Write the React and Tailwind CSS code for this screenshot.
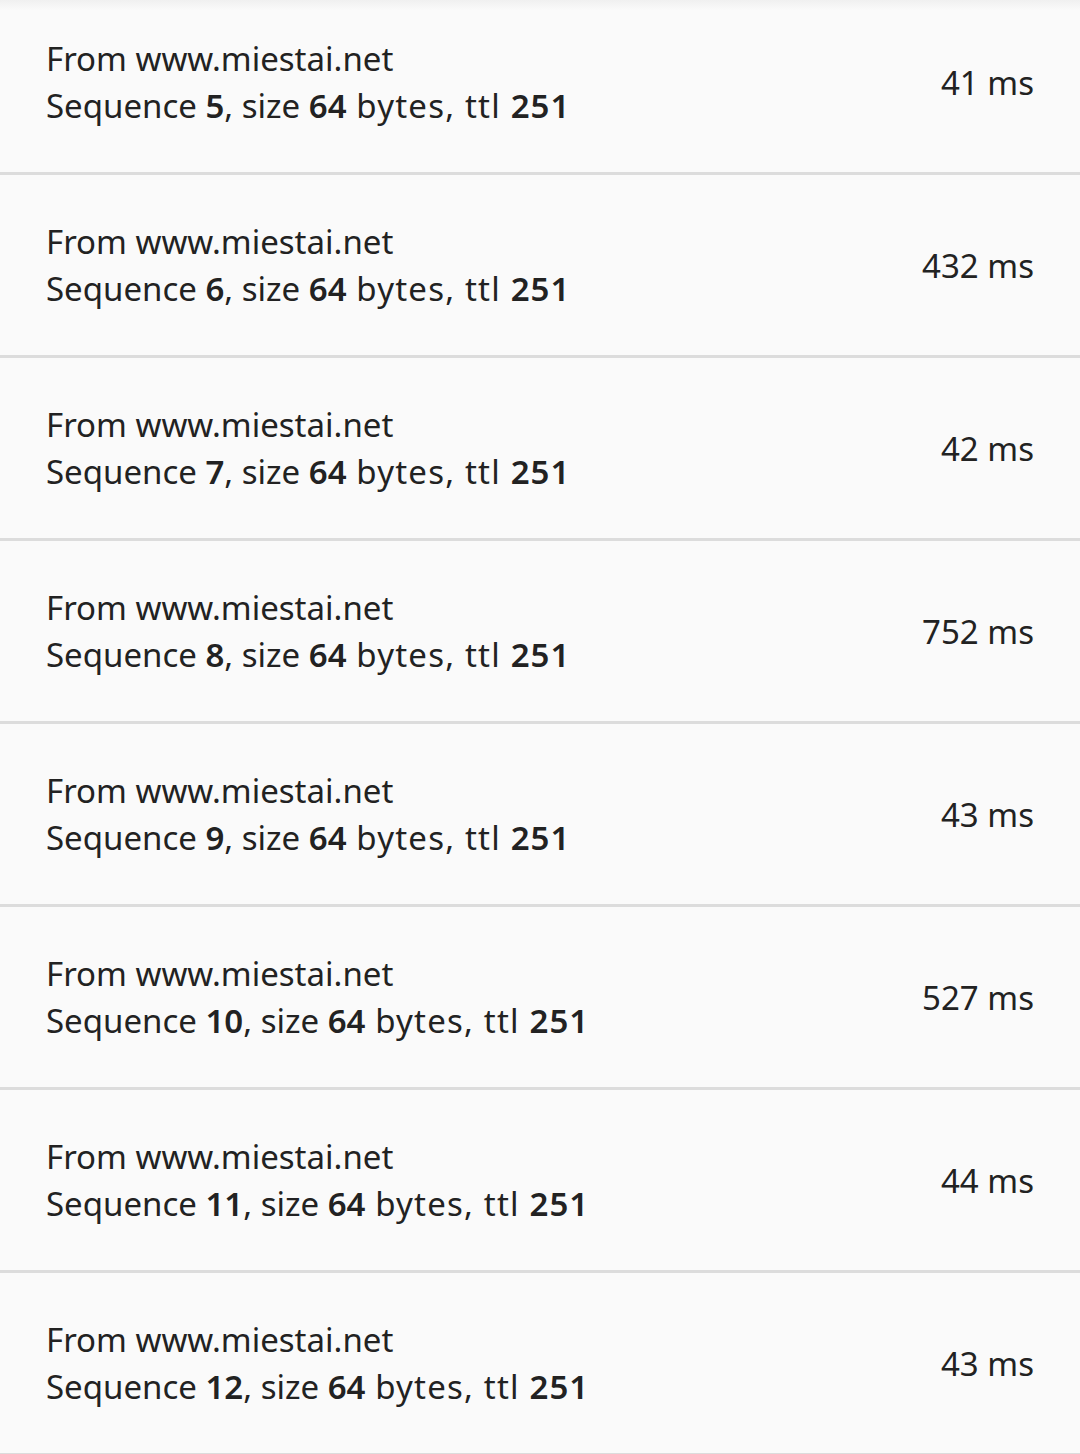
const rows = [
  { seq: 5, ms: 41 },
  { seq: 6, ms: 432 },
  { seq: 7, ms: 42 },
  { seq: 8, ms: 752 },
  { seq: 9, ms: 43 },
  { seq: 10, ms: 527 },
  { seq: 11, ms: 44 },
  { seq: 12, ms: 43 },
]

function PingRow({ seq, ms }) {
  return (
    <div className="h-[183px] flex items-center justify-between pl-[46px] pr-[46px] border-b-[3px] border-[#dcdcdc]">
      <div className="flex flex-col gap-[12px] leading-[35px]">
        <span>From www.miestai.net</span>
        <span>
          Sequence <b className="font-semibold">{seq}</b>, size <b className="font-semibold">64</b>
          <span className="tracking-[1.2px]"> bytes, ttl </span>
          <b className="font-semibold tracking-[1px]">251</b>
        </span>
      </div>
      <span className="leading-[35px]">{ms} ms</span>
    </div>
  )
}

export default function App() {
  return (
    <div
      className="relative h-[1454px] overflow-hidden bg-[#fafafa] text-[#222222] text-[33px]"
      style={{ fontFamily: '"Noto Sans", "Open Sans", sans-serif' }}
    >
      <div className="absolute top-0 left-0 right-0 h-[10px] bg-gradient-to-b from-[#f0f0f0] to-[#fafafa]" />
      <div className="-mt-[8px]">
        {rows.map((r) => (
          <PingRow key={r.seq} {...r} />
        ))}
      </div>
    </div>
  )
}
